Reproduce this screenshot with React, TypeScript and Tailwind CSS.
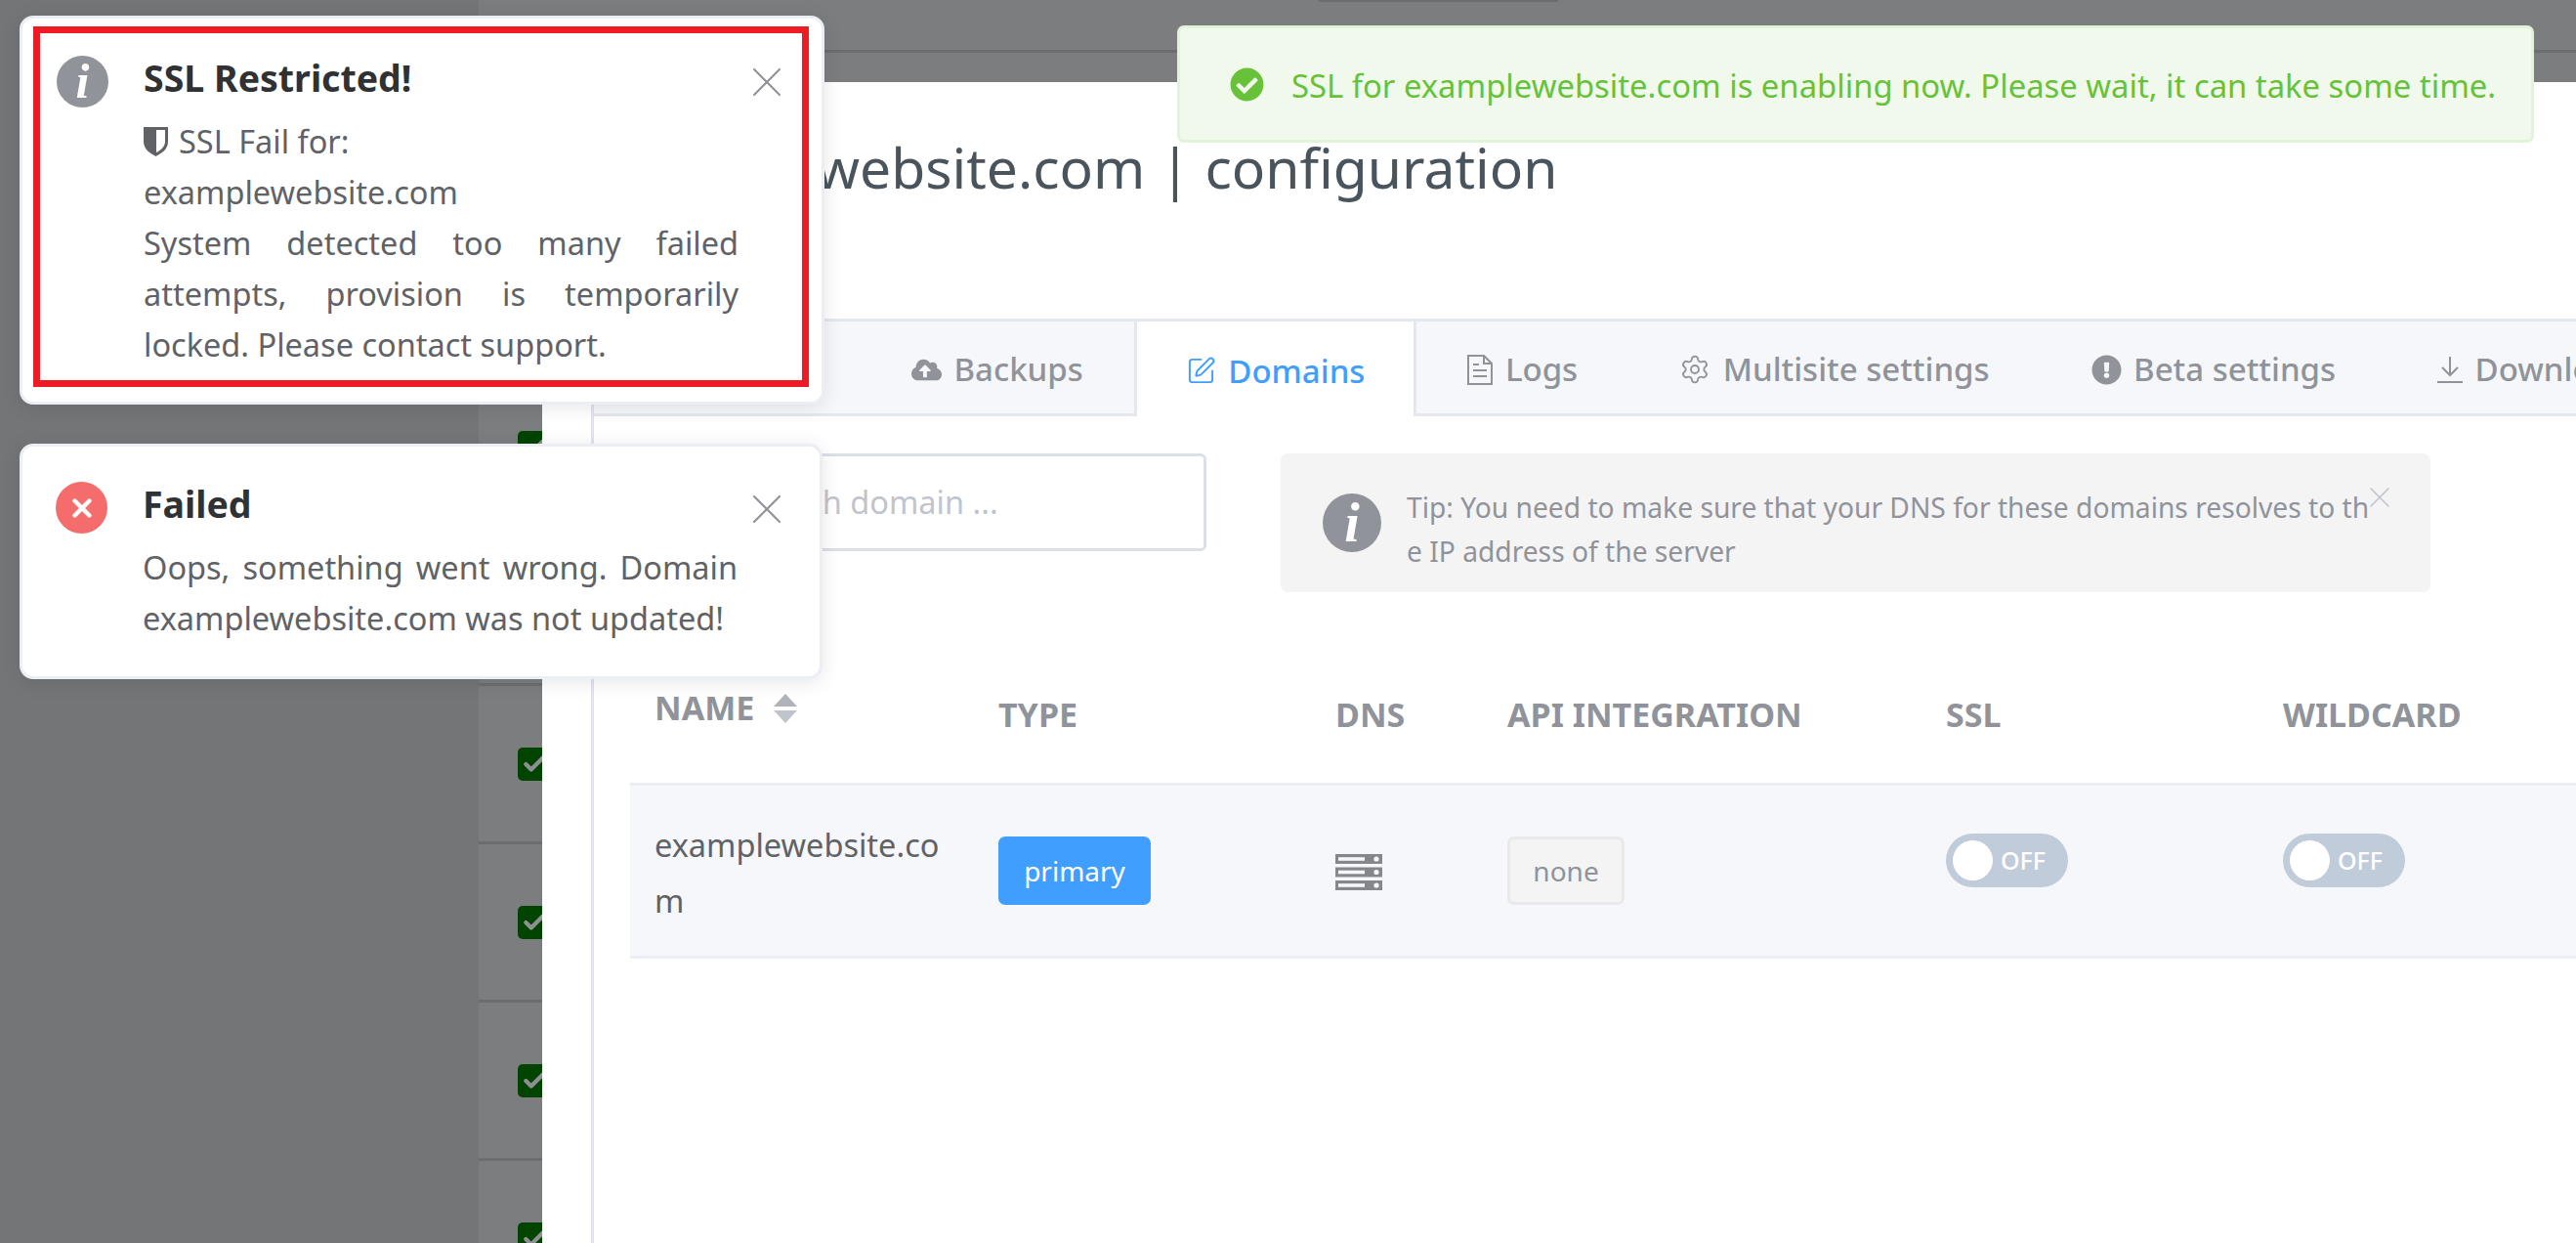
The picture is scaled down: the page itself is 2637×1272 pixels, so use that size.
import React from "react";
import { Settings, SquarePen, X, Check } from "lucide-react";
import { FaCloudUploadAlt, FaCheckCircle, FaExclamationCircle } from "react-icons/fa";

const font = "font-['Noto_Sans','Open_Sans',sans-serif]";

const InfoIcon = ({ className }: { className: string }) => (
  <div className={`flex shrink-0 items-center justify-center rounded-full bg-[#909399] font-['Liberation_Serif',serif] font-bold italic text-white ${className}`}>
    i
  </div>
);

const Row = () => (
  <div className="flex h-[162px] shrink-0 items-center border-b-[3px] border-[#6c6d6f] pl-[40px]">
    <div className="flex h-[34px] w-[34px] shrink-0 items-center justify-center rounded-[5px] bg-[#004400]">
      <Check size={26} strokeWidth={4} className="text-[#8d8f92]" />
    </div>
  </div>
);

const Tab = ({ icon, label, active }: { icon: React.ReactNode; label: string; active?: boolean }) => (
  <div
    className={`flex shrink-0 items-center gap-[12.5px] pt-[4px] text-[33px] font-medium ${
      active
        ? "z-10 h-[97px] border-x-[3px] border-[#e4e7ed] bg-white px-[50px] text-[#409eff]"
        : "h-[94px] px-[52px] text-[#909399]"
    }`}
  >
    {icon}
    {label}
  </div>
);

const Toast = ({
  icon,
  title,
  children,
}: {
  icon: React.ReactNode;
  title: string;
  children: React.ReactNode;
}) => (
  <div className="flex gap-[36px]">
    {icon}
    <div className="w-[609px]">
      <div className="text-[37.5px] font-bold leading-[52px] text-[#303133]">{title}</div>
      <div className="mt-[13px] text-[32.5px] leading-[52px] text-[#606266] [text-align:justify]">{children}</div>
    </div>
  </div>
);

export default function App() {
  return (
    <div className={`relative flex h-[1272px] w-full overflow-hidden bg-[#747577] ${font}`}>
      <div className="w-[490px] shrink-0" />
      <div className="relative min-w-0 flex-1 bg-[#7c7d7f]">
        <div className="flex flex-col">
          <div className="h-[54px] shrink-0 border-b-[3px] border-[#6c6d6f]" />
          {[0, 1, 2, 3, 4, 5, 6, 7].map((i) => (
            <Row key={i} />
          ))}
        </div>

        {/* drawer */}
        <div className="absolute left-[65px] right-0 top-[84px] bottom-0 bg-white pl-[50px]">
          <div className="h-full border-l-[3px] border-[#dfe4ed]">
            <h1 className="h-[242px] whitespace-nowrap pt-[42px] text-[57px] leading-[90px] text-[#49545c]">
              examplewebsite.com | configuration
            </h1>

            <div className="flex h-[100px] border-y-[3px] border-[#e4e7ed] bg-[#f5f7fa] pl-[273px]">
              <Tab label="Backups" icon={<FaCloudUploadAlt size={31} />} />
              <Tab active label="Domains" icon={<SquarePen size={31} strokeWidth={1.5} />} />
              <Tab
                label="Logs"
                icon={
                  <svg width="26" height="31" viewBox="0 0 26 31" fill="none" stroke="currentColor" strokeWidth="2">
                    <path d="M1 1 H17 L25 9 V30 H1 Z M17 1 V9 H25 M6 10 H12 M6 16 H20 M6 22 H20" />
                  </svg>
                }
              />
              <Tab label="Multisite settings" icon={<Settings size={32} strokeWidth={1.4} />} />
              <Tab label="Beta settings" icon={<FaExclamationCircle size={31} />} />
              <Tab
                label="Download"
                icon={
                  <svg width="26" height="30" viewBox="0 0 26 30" fill="none" stroke="currentColor" strokeWidth="2">
                    <path d="M13 2 V21 M5 13 L13 21 L21 13 M0 28 H26" />
                  </svg>
                }
              />
            </div>

            <div className="flex items-start gap-[76px] pl-[37px] pt-[38px]">
              <div className="flex h-[100px] w-[590px] shrink-0 items-center rounded-[6px] border-[3px] border-[#dcdfe6] pl-[111px] text-[32.5px] text-[#c0c4cc]">
                Search domain ...
              </div>
              <div className="relative flex h-[142px] w-[1177px] shrink-0 items-center gap-[26px] rounded-[7px] bg-[#f4f4f5] pl-[43px]">
                <InfoIcon className="h-[60px] w-[60px] text-[56px]" />
                <div className="mt-[14px] w-[995px] text-[28.2px] leading-[45px] text-[#909399] [word-break:break-all]">
                  Tip: You need to make sure that your DNS for these domains resolves to the IP address of the server
                </div>
                <X size={36} strokeWidth={1} className="absolute right-[34px] top-[27px] text-[#c0c4cc]" />
              </div>
            </div>

            <div className="ml-[37px] mt-[74px]">
              <div className="flex h-[121px] items-center pb-[18px] pl-[25px] text-[34px] font-bold text-[#909399]">
                <div className="relative -top-[7px] flex w-[352px] shrink-0 items-center gap-[19px]">
                  NAME
                  <svg width="26" height="30" viewBox="0 0 26 30">
                    <path d="M13 0 L25 13 H1 Z" fill="#b0b3b9" />
                    <path d="M13 30 L25 17 H1 Z" fill="#c0c4cc" />
                  </svg>
                </div>
                <div className="w-[345px] shrink-0">TYPE</div>
                <div className="w-[176px] shrink-0">DNS</div>
                <div className="w-[449px] shrink-0 whitespace-nowrap">API INTEGRATION</div>
                <div className="w-[345px] shrink-0">SSL</div>
                <div className="shrink-0 whitespace-nowrap">WILDCARD</div>
              </div>
              <div className="flex h-[180px] items-start border-y-[3px] border-[#ebeef5] bg-[#f5f7fa] pl-[25px] text-[32.5px] text-[#606266]">
                <div className="w-[352px] shrink-0 pt-[32px] leading-[57px]">
                  <div className="w-[300px] [word-break:break-all]">examplewebsite.com</div>
                </div>
                <div className="w-[345px] shrink-0 pt-[52px]">
                  <div className="flex h-[70px] w-[156px] items-center justify-center rounded-[7px] bg-[#409eff] text-[28px] text-white">
                    primary
                  </div>
                </div>
                <div className="w-[176px] shrink-0 pt-[70px]">
                  <svg width="48" height="37" viewBox="0 0 48 37" fill="#85878a" className="block">
                    <rect width="48" height="10" />
                    <rect y="13.5" width="48" height="10" />
                    <rect y="27" width="48" height="10" />
                    <rect x="3" y="3.2" width="27" height="3.6" fill="#f5f7fa" />
                    <rect x="3" y="16.7" width="27" height="3.6" fill="#f5f7fa" />
                    <rect x="3" y="30.2" width="27" height="3.6" fill="#f5f7fa" />
                    <circle cx="42" cy="5" r="2.6" fill="#f5f7fa" />
                    <circle cx="42" cy="18.5" r="2.6" fill="#f5f7fa" />
                    <circle cx="42" cy="32" r="2.6" fill="#f5f7fa" />
                  </svg>
                </div>
                <div className="w-[449px] shrink-0 pt-[52px]">
                  <div className="flex h-[70px] w-[120px] items-center justify-center rounded-[7px] border-[3px] border-[#e9e9eb] bg-[#f4f4f5] text-[28px] text-[#909399]">
                    none
                  </div>
                </div>
                {[0, 1].map((i) => (
                  <div key={i} className="w-[345px] shrink-0 pt-[49px]">
                    <div className="flex h-[55px] w-[125px] items-center gap-[8px] rounded-full bg-[#c0ccda] pl-[7px] text-[25px] font-medium text-white">
                      <span className="h-[41px] w-[41px] rounded-full bg-white" />
                      OFF
                    </div>
                  </div>
                ))}
              </div>
            </div>
          </div>
        </div>

        {/* stray bit of the page behind the overlay */}
        <div className="absolute left-[860px] top-0 h-[2px] w-[245px] bg-[#6c6d6f]" />
      </div>

      {/* notifications */}
      <div className="absolute left-[20px] top-[16px] h-[398px] w-[824px] rounded-[14px] border-[3px] border-[#ebeef5] bg-white pl-[11px] pt-[8px] shadow-[0_3px_20px_rgba(0,0,0,0.1)]">
        <div className="h-[369px] w-[794px] border-[7px] border-[#ed1c24] pl-[17px] pt-[20px]">
          <Toast
            title="SSL Restricted!"
            icon={<InfoIcon className="mt-[3px] h-[53px] w-[53px] text-[50px]" />}
          >
            <div className="flex items-center gap-[11px] text-left">
              <svg width="25" height="30" viewBox="0 0 25 30" className="shrink-0">
                <path d="M0 0 H25 V15 C25 23 18 27 12.5 30 C7 27 0 23 0 15 Z" fill="#606266" />
                <path d="M13 3 H22 V15 C22 20 17 24 13 26 Z" fill="#ffffff" />
              </svg>
              SSL Fail for:
            </div>
            <div>examplewebsite.com</div>
            <div>System detected too many failed attempts, provision is temporarily locked. Please contact support.</div>
          </Toast>
        </div>
        <X size={52} strokeWidth={1} className="absolute left-[736px] top-[39px] text-[#909399]" />
      </div>
      <div className="absolute left-[20px] top-[454px] h-[241px] w-[822px] rounded-[14px] border-[3px] border-[#ebeef5] bg-white pl-[34px] pt-[33px] shadow-[0_3px_20px_rgba(0,0,0,0.1)]">
        <Toast
          title="Failed"
          icon={
            <div className="mt-[3px] flex h-[53px] w-[53px] shrink-0 items-center justify-center rounded-full bg-[#f56c6c]">
              <X size={30} strokeWidth={3.5} className="text-white" />
            </div>
          }
        >
          Oops, something went wrong. Domain examplewebsite.com was not updated!
        </Toast>
        <X size={52} strokeWidth={1} className="absolute left-[736px] top-[38px] text-[#909399]" />
      </div>

      {/* message */}
      <div className="absolute left-[1205px] top-[26px] flex h-[120px] w-[1389px] items-center gap-[28px] rounded-[7px] border-[3px] border-[#e1f3d8] bg-[#f0f9eb] pl-[51px] text-[32.8px] text-[#67c23a]">
        <FaCheckCircle size={35} className="shrink-0" />
        <span className="whitespace-nowrap pt-[4px]">SSL for examplewebsite.com is enabling now. Please wait, it can take some time.</span>
      </div>
    </div>
  );
}
